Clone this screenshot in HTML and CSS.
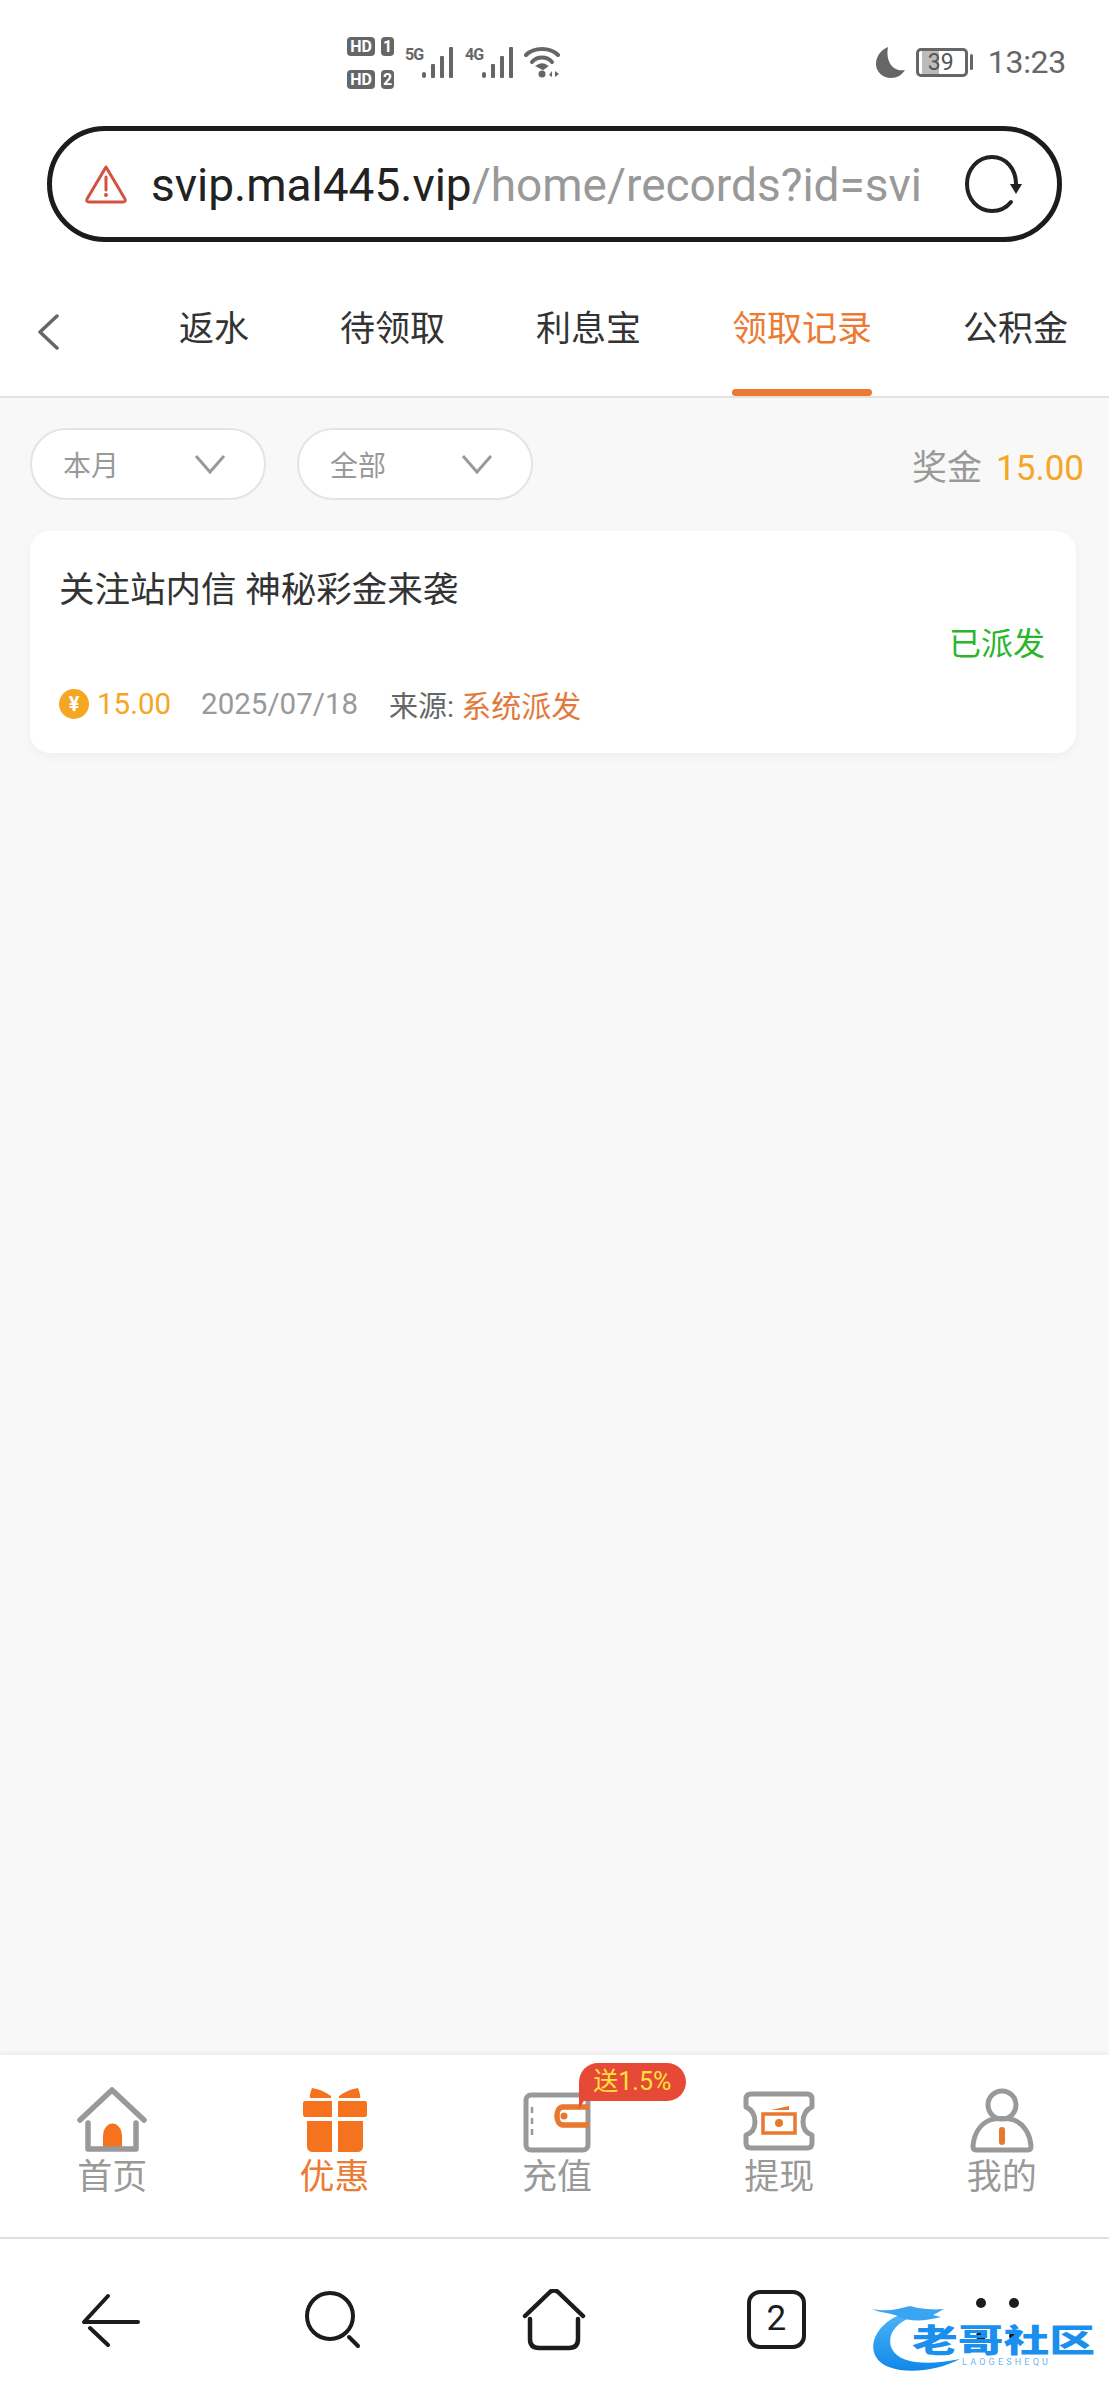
FILE: index.html
```html
<!DOCTYPE html>
<html lang="zh-CN">
<head>
    <meta charset="UTF-8">
    <meta name="viewport" content="width=device-width, initial-scale=1.0">
    <title>领取记录</title>
    <link rel="stylesheet" href="styles.css">
</head>
<body>
    <div class="page">
        <!-- phone status bar -->
        <div class="statusbar">
            <div class="status-left">
                <div class="sims">
                    <div class="sim"><span class="hd">HD</span><span class="slot">1</span></div>
                    <div class="sim"><span class="hd">HD</span><span class="slot">2</span></div>
                </div>
                <div class="signal">
                    <span class="net">5G</span>
                    <svg width="32" height="31" viewBox="0 0 32 31"><g fill="#666"><rect x="0" y="25" width="4" height="6" rx="2"/><rect x="9" y="17" width="4" height="14" rx="1"/><rect x="18" y="9" width="4" height="22" rx="1"/><rect x="27" y="0" width="4" height="31" rx="1"/></g></svg>
                </div>
                <div class="signal">
                    <span class="net">4G</span>
                    <svg width="32" height="31" viewBox="0 0 32 31"><g fill="#666"><rect x="0" y="25" width="4" height="6" rx="2"/><rect x="9" y="17" width="4" height="14" rx="1"/><rect x="18" y="9" width="4" height="22" rx="1"/><rect x="27" y="0" width="4" height="31" rx="1"/></g></svg>
                </div>
                <svg class="wifi" width="38" height="32" viewBox="0 0 38 32"><g fill="none" stroke="#666" stroke-width="4" stroke-linecap="round"><path d="M2 9C10 1 26 1 34 9"/><path d="M8 16C13 10 23 10 28 16"/></g><path d="M13 20C16 18 20 18 23 20L19 23Z" fill="#666" stroke="#666" stroke-width="2"/><circle cx="18" cy="28" r="3.5" fill="#666"/><path d="M28 25V31L25 29ZM31 25V31L35 28Z" fill="#666"/></svg>
            </div>
            <div class="status-right">
                <svg width="30" height="31" viewBox="0 0 30 31"><path d="M13 0C6 3 1 9 1 17C1 25 8 31 16 31C22 31 27 28 30 23C20 25 10 17 13 0Z" fill="#666"/></svg>
                <div class="battery"><span class="battery-level"></span><span class="battery-num">39</span></div>
                <span class="battery-nub"></span>
                <span class="clock">13:23</span>
            </div>
        </div>

        <!-- address bar -->
        <div class="urlbar">
            <svg class="url-warn" width="44" height="40" viewBox="0 0 44 40"><path d="M22 3L41 35Q42 38 39 38H5Q2 38 3 35Z" fill="none" stroke="#d4523f" stroke-width="3" stroke-linejoin="round"/><path d="M22 13V26" stroke="#d4523f" stroke-width="3" stroke-linecap="round"/><circle cx="22" cy="31" r="2" fill="#d4523f"/></svg>
            <div class="url-text"><span class="url-host">svip.mal445.vip</span><span class="url-path">/home/records?id=svi</span></div>
            <svg class="url-reload" width="58" height="60" viewBox="0 0 58 60"><path d="M52 30C52 15 42 3 28 3C14 3 3 15 3 30C3 45 14 57 28 57C36 57 43 53 47 48" fill="none" stroke="#222" stroke-width="4" stroke-linecap="round"/><path d="M46 30H58L52 40Z" fill="#222"/></svg>
        </div>

        <!-- section tabs -->
        <div class="tabs">
            <svg class="tabs-back" width="24" height="36" viewBox="0 0 24 36"><path d="M21 2L4 18L21 34" fill="none" stroke="#666" stroke-width="3.5" stroke-linecap="round" stroke-linejoin="round"/></svg>
            <div class="tab">返水</div>
            <div class="tab">待领取</div>
            <div class="tab">利息宝</div>
            <div class="tab active">领取记录</div>
            <div class="tab">公积金</div>
        </div>

        <div class="main">
            <div class="filters">
                <div class="pill"><span>本月</span><svg width="32" height="20" viewBox="0 0 32 20"><path d="M2 2L16 18L30 2" fill="none" stroke="#999" stroke-width="3"/></svg></div>
                <div class="pill"><span>全部</span><svg width="32" height="20" viewBox="0 0 32 20"><path d="M2 2L16 18L30 2" fill="none" stroke="#999" stroke-width="3"/></svg></div>
                <div class="bonus">奖金<span class="bonus-num">15.00</span></div>
            </div>

            <div class="card">
                <div class="card-title">关注站内信 神秘彩金来袭</div>
                <div class="card-status">已派发</div>
                <div class="card-meta">
                    <span class="coin">¥</span>
                    <span class="amount">15.00</span>
                    <span class="date">2025/07/18</span>
                    <span class="source">来源: <em>系统派发</em></span>
                </div>
            </div>
        </div>

        <!-- site bottom nav -->
        <div class="nav">
            <div class="nav-item">
                <svg width="72" height="66" viewBox="0 0 72 66"><path d="M27 63H46V50C46 32 27 32 27 50Z" fill="#f5731f"/><path d="M12 36V62H60V36M4 33L36 3L68 33" fill="none" stroke="#999" stroke-width="5.5" stroke-linejoin="round" stroke-linecap="round"/></svg>
                <span>首页</span>
            </div>
            <div class="nav-item current">
                <svg width="72" height="66" viewBox="0 0 72 66"><g fill="#f5731f"><path d="M13 1Q10 9 11 11H32V9Q22 2 13 1Z"/><path d="M59 1Q62 9 61 11H40V9Q50 2 59 1Z"/><path d="M4 16Q4 14 6 14H33V30H6Q4 30 4 27Z"/><path d="M68 16Q68 14 66 14H39V30H66Q68 30 68 27Z"/><path d="M8 34H33V65H14Q8 65 8 59Z"/><path d="M64 34H39V65H58Q64 65 64 59Z"/></g></svg>
                <span>优惠</span>
            </div>
            <div class="nav-item">
                <svg width="72" height="66" viewBox="0 0 72 66"><rect x="5" y="8" width="62" height="55" rx="5" fill="none" stroke="#999" stroke-width="5"/><path d="M11 20V50" stroke="#999" stroke-width="2.5" stroke-dasharray="6 5"/><path d="M68 20H42C34 20 34 38 42 38H68" fill="none" stroke="#e8782e" stroke-width="5.5"/><circle cx="43" cy="29" r="3.5" fill="#e8782e"/></svg>
                <span>充值</span>
                <div class="nav-badge">送1.5%</div>
            </div>
            <div class="nav-item">
                <svg width="72" height="66" viewBox="0 0 72 66"><path d="M8 7H64Q69 7 69 12V20Q60 24 60 35Q60 45 69 48V56Q69 61 64 61H8Q3 61 3 56V48Q12 45 12 35Q12 24 3 20V12Q3 7 8 7Z" fill="none" stroke="#999" stroke-width="5" stroke-linejoin="round"/><rect x="20" y="27" width="32" height="19" fill="none" stroke="#e8782e" stroke-width="3.5"/><circle cx="36" cy="36" r="4" fill="#e8782e"/><path d="M28 23L46 19V23Z" fill="#e8782e"/></svg>
                <span>提现</span>
            </div>
            <div class="nav-item">
                <svg width="72" height="66" viewBox="0 0 72 66"><circle cx="36" cy="18" r="14" fill="none" stroke="#999" stroke-width="5"/><path d="M24 33C14 37 8 47 7 59Q7 63 10 63H62Q65 63 65 59C64 47 58 37 48 33C42 31 30 31 24 33Z" fill="none" stroke="#999" stroke-width="5" stroke-linejoin="round"/><path d="M36 43V55" stroke="#e8782e" stroke-width="6" stroke-linecap="round"/></svg>
                <span>我的</span>
            </div>
        </div>

        <!-- browser toolbar -->
        <div class="toolbar">
            <div class="tool">
                <svg width="60" height="54" viewBox="0 0 60 54"><g fill="none" stroke="#1c1c1c" stroke-width="4" stroke-linecap="round" stroke-linejoin="round"><path d="M27 3L3 29H57"/><path d="M9 35L27 52"/></g></svg>
            </div>
            <div class="tool">
                <svg width="56" height="58" viewBox="0 0 56 58"><g fill="none" stroke="#1c1c1c" stroke-width="4" stroke-linecap="round"><ellipse cx="25" cy="25" rx="23" ry="23"/><path d="M44 46L53 55"/></g></svg>
            </div>
            <div class="tool">
                <svg width="64" height="62" viewBox="0 0 64 62"><g fill="none" stroke="#1c1c1c" stroke-width="4.5" stroke-linecap="round" stroke-linejoin="round"><path d="M3 27L28 3Q32 0 36 3L61 27"/><path d="M8 30V50Q8 59 17 59H47Q56 59 56 50V30"/></g></svg>
            </div>
            <div class="tool">
                <div class="tabs-count">2</div>
            </div>
            <div class="tool">
                <svg width="44" height="44" viewBox="0 0 44 44"><g fill="#1c1c1c"><circle cx="5" cy="5" r="5"/><circle cx="38" cy="5" r="5"/><circle cx="5" cy="38" r="5"/><circle cx="38" cy="38" r="5"/></g></svg>
            </div>
        </div>

        <!-- community watermark over the toolbar -->
        <div class="mark">
            <svg class="mark-dragon" width="100" height="72" viewBox="0 0 100 72"><defs><linearGradient id="markBlue" x1="0" y1="0" x2="0" y2="1"><stop offset="0" stop-color="#4db4f5"/><stop offset="1" stop-color="#1088ea"/></linearGradient></defs><path d="M34 11C10 20 0 40 8 54C18 72 62 72 92 56C62 62 32 62 24 46C18 32 28 20 44 14Z" fill="url(#markBlue)"/><path d="M4 6C20 9 30 6 42 3L50 5C58 6 66 7 76 6L65 12L73 14C55 19 40 18 32 14C25 10 12 10 4 6Z" fill="#39a5f2"/></svg>
            <div class="mark-name">老哥社区</div>
            <div class="mark-sub">LAOGESHEQU</div>
        </div>
    </div>
</body>
</html>
```

FILE: styles.css
```css
body, html {
    margin: 0;
    padding: 0;
    height: 100%;
    background: #fff;
    font-family: Roboto, "Noto Sans CJK SC", sans-serif;
}
svg {
    display: block;
    flex: none;
}
.page {
    position: relative;
    display: flex;
    flex-direction: column;
    width: 1109px;
    height: 2400px;
    overflow: hidden;
}

/* status bar */
.statusbar {
    display: flex;
    justify-content: space-between;
    align-items: flex-start;
    height: 126px;
    box-sizing: border-box;
    padding: 37px 43px 0 347px;
}
.status-left {
    display: flex;
    align-items: flex-start;
}
.sims {
    display: flex;
    flex-direction: column;
    gap: 14px;
    margin-right: 11px;
}
.sim {
    display: flex;
    gap: 6px;
    height: 19px;
}
.hd, .slot {
    display: block;
    background: #666;
    color: #fff;
    font-size: 16px;
    font-weight: 700;
    line-height: 19px;
    text-align: center;
    border-radius: 4px;
}
.hd { width: 28px; }
.slot { width: 13px; }
.signal {
    display: flex;
    align-items: flex-start;
    margin: 10px 11px 0 0;
}
.net {
    width: 17px;
    margin-top: 1px;
    font-size: 16px;
    font-weight: 700;
    line-height: 14px;
    letter-spacing: -1px;
    color: #666;
}
.wifi { margin: 9px 0 0 -1px; }
.status-right {
    display: flex;
    align-items: center;
    height: 40px;
    margin-top: 5px;
}
.battery {
    position: relative;
    width: 52px;
    height: 29px;
    box-sizing: border-box;
    margin-left: 11px;
    border: 3px solid #666;
    border-radius: 5px;
}
.battery-level {
    display: block;
    width: 17px;
    height: 100%;
    margin-left: 3px;
    background: #bbb;
}
.battery-num {
    position: absolute;
    top: 0;
    left: 9px;
    font-size: 23px;
    line-height: 23px;
    color: #555;
}
.battery-nub {
    width: 3px;
    height: 16px;
    margin-left: 2px;
    background: #666;
    border-radius: 2px;
}
.clock {
    margin-left: 15px;
    font-size: 32px;
    letter-spacing: -0.3px;
    color: #666;
}

/* address bar */
.urlbar {
    display: flex;
    align-items: center;
    flex: none;
    width: 1015px;
    height: 116px;
    box-sizing: border-box;
    margin-left: 47px;
    padding: 0 36px 0 32px;
    border: 5px solid #1c1c1c;
    border-radius: 58px;
}
.url-warn { margin-right: 23px; }
.url-text {
    width: 771px;
    padding-top: 2px;
    white-space: nowrap;
    font-size: 46px;
    line-height: 60px;
}
.url-host { color: #222; }
.url-path { color: #999; }
.url-reload { margin-left: 42px; }

/* tabs */
.tabs {
    display: flex;
    flex: none;
    gap: 91px;
    height: 139px;
    box-sizing: border-box;
    margin-top: 17px;
    padding: 50px 0 0 36px;
    border-bottom: 2px solid #e2e2e2;
    overflow: hidden;
}
.tabs-back {
    margin: 5px 28px 0 0;
}
.tab {
    position: relative;
    flex: none;
    font-size: 35px;
    line-height: 42px;
    color: #333;
}
.tab.active { color: #ec7a33; }
.tab.active:after {
    content: "";
    position: absolute;
    left: 0;
    right: 0;
    top: 80px;
    height: 7px;
    background: #ec7a33;
    border-radius: 4px;
}

/* records list */
.main {
    flex: 1;
    background: #f8f8f8;
    padding: 30px 0 0;
}
.filters {
    display: flex;
    align-items: center;
    gap: 31px;
    height: 72px;
    padding: 0 25px 0 30px;
}
.pill {
    display: flex;
    justify-content: space-between;
    align-items: center;
    width: 236px;
    height: 72px;
    box-sizing: border-box;
    padding: 0 38px 0 31px;
    background: #fff;
    border: 2px solid #e4e4e4;
    border-radius: 36px;
    font-size: 28px;
    color: #999;
}
.bonus {
    margin-left: auto;
    font-size: 35px;
    color: #999;
}
.bonus-num {
    margin-left: 14px;
    font-size: 35px;
    color: #f5a623;
}
.card {
    width: 1046px;
    height: 222px;
    box-sizing: border-box;
    margin: 31px 0 0 30px;
    padding: 37px 31px 29px 29px;
    background: #fff;
    border-radius: 20px;
    box-shadow: 0 4px 10px rgba(0, 0, 0, 0.04);
}
.card-title {
    font-size: 35.5px;
    line-height: 44px;
    color: #333;
}
.card-status {
    margin-top: 12px;
    font-size: 32px;
    line-height: 40px;
    text-align: right;
    color: #2bb52b;
}
.card-meta {
    display: flex;
    align-items: center;
    height: 40px;
    margin-top: 20px;
    font-size: 29px;
}
.coin {
    width: 30px;
    height: 30px;
    background: #f5a623;
    border-radius: 50%;
    font-size: 20px;
    font-weight: 700;
    line-height: 30px;
    text-align: center;
    color: #fff;
}
.amount {
    margin-left: 8px;
    font-size: 29.5px;
    color: #f5a623;
}
.date {
    margin-left: 30px;
    font-size: 29.5px;
    color: #999;
}
.source {
    margin-left: 31px;
    color: #666;
}
.source em {
    font-size: 30px;
    font-style: normal;
    color: #e07a3c;
}

/* bottom nav */
.nav {
    display: flex;
    flex: none;
    height: 182px;
    box-sizing: border-box;
    padding: 32px 0 0 1px;
    background: #fff;
    box-shadow: 0 -2px 4px rgba(0, 0, 0, 0.05);
}
.nav-item {
    position: relative;
    display: flex;
    flex-direction: column;
    align-items: center;
    flex: none;
    width: 222.4px;
    font-size: 35px;
    line-height: 44px;
    color: #999;
}
.nav-item span { margin-top: 3px; }
.nav-item.current span { color: #ec7a33; }
.nav-badge {
    position: absolute;
    left: 133px;
    top: -24px;
    width: 107px;
    height: 38px;
    background: #e64a36;
    border-radius: 19px 19px 19px 0;
    font-size: 25px;
    line-height: 38px;
    text-align: center;
    color: #ffe13d;
}
.nav-badge:after {
    content: "";
    position: absolute;
    left: 0;
    top: 26px;
    border-top: 20px solid #e64a36;
    border-right: 12px solid transparent;
}

/* browser toolbar */
.toolbar {
    display: flex;
    flex: none;
    align-items: center;
    height: 163px;
    border-top: 2px solid #e0e0e0;
    box-sizing: border-box;
}
.tool {
    display: flex;
    justify-content: center;
    flex: 1;
}
.tabs-count {
    width: 59px;
    height: 59px;
    box-sizing: border-box;
    border: 4.5px solid #1c1c1c;
    border-radius: 13px;
    font-size: 35px;
    line-height: 50px;
    text-align: center;
    color: #1c1c1c;
}

/* watermark */
.mark {
    position: absolute;
    left: 868px;
    top: 2303px;
    width: 230px;
    height: 72px;
}
.mark-dragon {
    position: absolute;
    left: 0;
    top: 0;
}
.mark-name {
    position: absolute;
    left: 44px;
    top: 20px;
    width: 126px;
    font-size: 32px;
    font-weight: 900;
    line-height: 36px;
    white-space: nowrap;
    color: #1a8fee;
    transform: scaleX(1.43);
    transform-origin: left top;
}
.mark-sub {
    position: absolute;
    left: 94px;
    top: 54px;
    font-size: 9px;
    line-height: 11px;
    letter-spacing: 3.2px;
    color: #6bb7f0;
}
```
